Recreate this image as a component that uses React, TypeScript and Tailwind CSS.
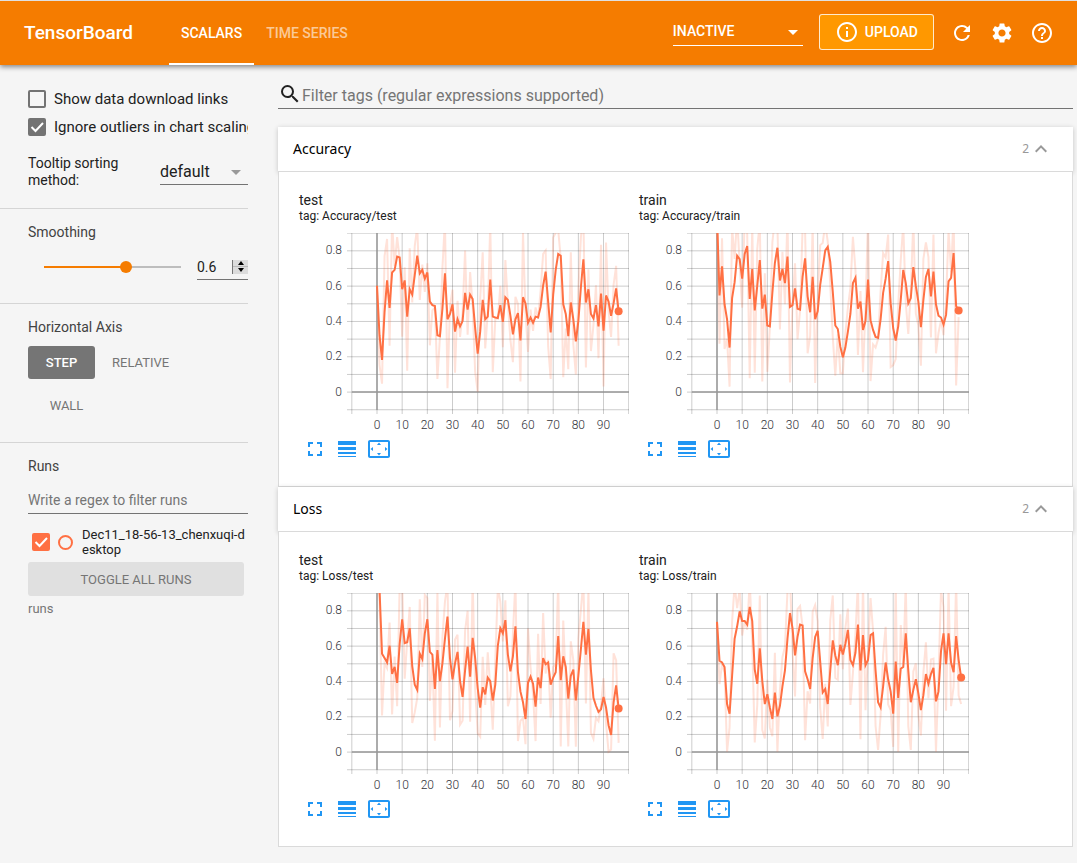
import { useState } from "react";
import type { ReactNode } from "react";
import {
  MdArrowDropDown,
  MdExpandLess,
  MdFullscreen,
  MdHelpOutline,
  MdInfoOutline,
  MdLineWeight,
  MdRefresh,
  MdSearch,
  MdSettings,
  MdSettingsOverscan,
} from "react-icons/md";

const WEIGHT = 0.6;

const accuracyTest = [
  0.6, 0.32, 0.18, 0.45, 0.63, 0.475, 0.675, 0.69, 0.765, 0.76, 0.58, 0.63, 0.425, 0.58, 0.55, 0.66, 0.77, 0.67, 0.69,
  0.64, 0.675, 0.51, 0.49, 0.485, 0.32, 0.315, 0.47, 0.67, 0.41, 0.44, 0.495, 0.34, 0.41, 0.37, 0.4, 0.56, 0.465, 0.55,
  0.525, 0.36, 0.215, 0.34, 0.52, 0.41, 0.425, 0.635, 0.425, 0.42, 0.417, 0.49, 0.395, 0.535, 0.52, 0.43, 0.325, 0.41,
  0.445, 0.29, 0.535, 0.5, 0.39, 0.42, 0.39, 0.425, 0.42, 0.48, 0.6, 0.68, 0.51, 0.335, 0.55, 0.69, 0.78, 0.77, 0.495,
  0.44, 0.315, 0.505, 0.41, 0.285, 0.4, 0.59, 0.75, 0.505, 0.58, 0.44, 0.415, 0.49, 0.37, 0.555, 0.345, 0.545, 0.51,
  0.43, 0.5, 0.585, 0.455,
];

const accuracyTrain = [
  1, 0.545, 0.71, 0.495, 0.41, 0.25, 0.53, 0.62, 0.77, 0.75, 0.64, 0.78, 0.825, 0.525, 0.695, 0.46, 0.6, 0.745, 0.47,
  0.55, 0.375, 0.37, 0.56, 0.73, 0.815, 0.63, 0.695, 0.615, 0.765, 0.48, 0.49, 0.585, 0.47, 0.465, 0.65, 0.755, 0.54,
  0.45, 0.65, 0.41, 0.455, 0.605, 0.7, 0.8, 0.82, 0.735, 0.565, 0.375, 0.355, 0.255, 0.195, 0.25, 0.34, 0.44, 0.615,
  0.645, 0.47, 0.51, 0.35, 0.4, 0.635, 0.405, 0.35, 0.31, 0.305, 0.41, 0.56, 0.64, 0.74, 0.5, 0.36, 0.29, 0.37, 0.52,
  0.69, 0.615, 0.5, 0.53, 0.705, 0.6, 0.51, 0.365, 0.52, 0.65, 0.695, 0.54, 0.68, 0.495, 0.43, 0.42, 0.38, 0.435, 0.625,
  0.645, 0.785, 0.485, 0.46,
];

const lossTest = [
  1, 0.92, 0.555, 0.53, 0.505, 0.6, 0.44, 0.48, 0.39, 0.61, 0.75, 0.615, 0.62, 0.7, 0.485, 0.38, 0.35, 0.555, 0.525,
  0.67, 0.75, 0.565, 0.55, 0.355, 0.575, 0.4, 0.5, 0.64, 0.765, 0.53, 0.41, 0.5, 0.565, 0.4, 0.31, 0.46, 0.595, 0.425,
  0.645, 0.53, 0.36, 0.25, 0.365, 0.325, 0.42, 0.4, 0.29, 0.38, 0.6, 0.7, 0.67, 0.745, 0.55, 0.455, 0.54, 0.71, 0.45,
  0.34, 0.28, 0.185, 0.39, 0.425, 0.385, 0.255, 0.42, 0.36, 0.53, 0.495, 0.505, 0.38, 0.42, 0.45, 0.655, 0.405, 0.54,
  0.48, 0.3, 0.43, 0.465, 0.29, 0.43, 0.58, 0.735, 0.55, 0.695, 0.46, 0.305, 0.26, 0.225, 0.24, 0.31, 0.25, 0.15, 0.095,
  0.28, 0.375, 0.245,
];

const lossTrain = [
  0.735, 0.515, 0.505, 0.48, 0.27, 0.215, 0.43, 0.64, 0.71, 0.795, 0.74, 0.74, 0.72, 0.82, 0.74, 0.465, 0.385, 0.585,
  0.4, 0.27, 0.325, 0.25, 0.185, 0.335, 0.2, 0.26, 0.37, 0.46, 0.64, 0.785, 0.7, 0.545, 0.65, 0.72, 0.715, 0.455, 0.41,
  0.355, 0.53, 0.65, 0.685, 0.51, 0.335, 0.355, 0.27, 0.46, 0.63, 0.545, 0.49, 0.605, 0.55, 0.61, 0.69, 0.52, 0.49,
  0.56, 0.72, 0.46, 0.66, 0.49, 0.52, 0.66, 0.67, 0.46, 0.28, 0.25, 0.37, 0.505, 0.41, 0.34, 0.215, 0.51, 0.305, 0.47,
  0.48, 0.67, 0.46, 0.28, 0.35, 0.41, 0.33, 0.235, 0.32, 0.44, 0.385, 0.44, 0.475, 0.285, 0.34, 0.57, 0.67, 0.495, 0.67,
  0.505, 0.45, 0.655, 0.52, 0.42,
];

// Inverts the debiased exponential moving average to recover the raw samples.
function rawFrom(smoothed: number[]): number[] {
  let last = 0;
  return smoothed.map((s, i) => {
    const acc = s * (1 - Math.pow(WEIGHT, i + 1));
    const raw = (acc - WEIGHT * last) / (1 - WEIGHT);
    last = acc;
    return Math.min(1, Math.max(0, raw));
  });
}

const xAt = (step: number) => 78 + step * 2.517;
const yAt = (value: number) => 158.7 - value * 176.6;
const toPoints = (values: number[]) => values.map((v, i) => `${xAt(i).toFixed(2)},${yAt(v).toFixed(2)}`).join(" ");

const xTicks = [-10, 0, 10, 20, 30, 40, 50, 60, 70, 80, 90, 100];
const yTicks = [-0.1, 0, 0.1, 0.2, 0.3, 0.4, 0.5, 0.6, 0.7, 0.8, 0.9];

function LineChart({ id, values }: { id: string; values: number[] }) {
  const end = values.length - 1;
  return (
    <svg width="330" height="202" viewBox="0 0 330 202" className="block" role="img" aria-label={id}>
      <defs>
        <clipPath id={id}>
          <rect x="53" y="0" width="277" height="177" />
        </clipPath>
      </defs>
      <g stroke="#000" strokeOpacity="0.2" strokeWidth="1">
        {xTicks.map((t) => (
          <line key={t} x1={xAt(t)} x2={xAt(t)} y1="0" y2="181" />
        ))}
        {yTicks.map((t) => (
          <line key={t} x1="48" x2="330" y1={yAt(t) + 0.4} y2={yAt(t) + 0.4} />
        ))}
      </g>
      <g stroke="#999" strokeWidth="1.5">
        <line x1={xAt(0)} x2={xAt(0)} y1="0" y2="177" />
        <line x1="53" x2="330" y1="159" y2="159" />
      </g>
      <g clipPath={`url(#${id})`} fill="none" stroke="#ff7043" strokeWidth="2">
        <polyline points={toPoints(rawFrom(values))} strokeOpacity="0.2" />
        <polyline points={toPoints(values)} />
      </g>
      <circle cx={xAt(end)} cy={yAt(values[end])} r="4" fill="#ff7043" />
      <g fill="#32323a" fontSize="12" fontWeight="300" fontFamily="Roboto, sans-serif">
        {[0, 0.2, 0.4, 0.6, 0.8].map((t) => (
          <text key={t} x="43" y={yAt(t) + 4} textAnchor="end">
            {t}
          </text>
        ))}
        {xTicks.slice(1, 11).map((t) => (
          <text key={t} x={xAt(t)} y="196" textAnchor="middle">
            {t}
          </text>
        ))}
      </g>
    </svg>
  );
}

function IconButton({ label, children }: { label: string; children: ReactNode }) {
  return (
    <button type="button" aria-label={label} className="flex size-8 items-center justify-center text-2xl">
      {children}
    </button>
  );
}

function ChartCard({ name, tag, values }: { name: string; tag: string; values: number[] }) {
  return (
    <article className="w-[330px]">
      <h3 className="text-sm leading-4">{name}</h3>
      <p className="text-xs leading-4">tag: {tag}</p>
      <div className="mt-[9px]">
        <LineChart id={tag.replace("/", "-")} values={values} />
      </div>
      <div className="-mt-0.5 flex text-[#2196f3]">
        <IconButton label="Toggle full size">
          <MdFullscreen />
        </IconButton>
        <IconButton label="Toggle y-axis log scale">
          <MdLineWeight />
        </IconButton>
        <IconButton label="Fit domain to data">
          <MdSettingsOverscan />
        </IconButton>
      </div>
    </article>
  );
}

function Category({ name, charts }: { name: string; charts: { name: string; values: number[] }[] }) {
  return (
    <section>
      <button
        type="button"
        className="flex h-[45px] w-full items-center border-b border-[#dadada] bg-white pr-5 pl-[15px] text-left font-['Noto_Sans',sans-serif] shadow-[0_1px_5px_rgba(0,0,0,0.2)]"
      >
        <span className="flex-1 text-sm text-black">{name}</span>
        <span className="text-xs text-[#999]">2</span>
        <MdExpandLess className="size-6 text-[#999]" />
      </button>
      <div className="flex flex-wrap gap-x-2.5 border-x border-b border-[#dadada] bg-white px-5 pt-5 pb-[21px]">
        {charts.map((c) => (
          <ChartCard key={c.name} name={c.name} tag={`${name}/${c.name}`} values={c.values} />
        ))}
      </div>
    </section>
  );
}

function Check({ id, label, initial }: { id: string; label: string; initial: boolean }) {
  return (
    <div className="flex h-7 items-center gap-2">
      <span className="grid shrink-0">
        <input
          id={id}
          type="checkbox"
          defaultChecked={initial}
          className="peer size-[18px] appearance-none rounded-xs border-2 border-[#737373] [grid-area:1/1] checked:bg-[#737373]"
        />
        <CheckMark />
      </span>
      <label htmlFor={id} className="text-[15px] whitespace-nowrap">
        {label}
      </label>
    </div>
  );
}

function CheckMark() {
  return (
    <svg
      viewBox="0 0 18 18"
      className="pointer-events-none invisible size-[18px] fill-none stroke-white stroke-2 [grid-area:1/1] peer-checked:visible"
    >
      <path d="M3.5 9l4 4L15 5" />
    </svg>
  );
}

function Header() {
  return (
    <header className="z-10 flex h-[65px] shrink-0 items-center border-t border-[#e0e0e0] bg-[#f57c00] pr-[15px] pl-6 font-medium text-white shadow-[0_2px_5px_rgba(0,0,0,0.45)]">
      <h1 className="text-[19px]">TensorBoard</h1>
      <nav className="ml-9 flex h-full flex-1 text-sm">
        <a href="#scalars" className="flex items-center border-b-2 border-white px-3 pt-0.5">
          SCALARS
        </a>
        <a href="#timeseries" className="flex items-center border-b-2 border-transparent px-3 pt-0.5 text-white/60">
          TIME SERIES
        </a>
      </nav>
      <div className="mb-1 grid w-[130px] items-center border-b border-white">
        <select aria-label="Inactive dashboards" className="h-7 appearance-none bg-transparent text-sm [grid-area:1/1]">
          <option>INACTIVE</option>
        </select>
        <MdArrowDropDown className="pointer-events-none mt-0.5 -mr-0.5 size-6 justify-self-end [grid-area:1/1]" />
      </div>
      <button
        type="button"
        className="mb-0.5 ml-4 flex h-9 items-center gap-1.5 rounded-[3px] border border-white/80 bg-[#ff9800] px-[15px] text-sm"
      >
        <MdInfoOutline className="size-6" />
        UPLOAD
      </button>
      <div className="ml-2 flex">
        <button type="button" aria-label="Reload" className="flex size-10 items-center justify-center">
          <MdRefresh className="size-6" />
        </button>
        <button type="button" aria-label="Settings" className="flex size-10 items-center justify-center">
          <MdSettings className="size-6" />
        </button>
        <button type="button" aria-label="Help" className="flex size-10 items-center justify-center">
          <MdHelpOutline className="size-6" />
        </button>
      </div>
    </header>
  );
}

function Smoothing() {
  const [value, setValue] = useState(WEIGHT);
  const pct = value * 100;
  const step = (delta: number) => setValue((v) => Math.min(1, Math.max(0, Math.round((v + delta) * 10) / 10)));
  return (
    <section className="h-[95px] border-b border-[#d5d5d5] pt-[15px] pl-7">
      <h2 className="text-sm leading-4 text-[#424242]">Smoothing</h2>
      <div className="mt-3.5 flex items-center pl-2.5">
        <input
          type="range"
          aria-label="Smoothing"
          min="0"
          max="1"
          step="0.1"
          value={value}
          onChange={(e) => setValue(Number(e.target.value))}
          style={{ backgroundImage: `linear-gradient(to right, #f57c00 ${pct}%, #bdbdbd ${pct}%)` }}
          className="h-3 w-[149px] appearance-none bg-[length:calc(100%-12px)_2px] bg-center bg-no-repeat [&::-webkit-slider-thumb]:size-3 [&::-webkit-slider-thumb]:appearance-none [&::-webkit-slider-thumb]:rounded-full [&::-webkit-slider-thumb]:bg-[#f57c00]"
        />
        <div className="ml-2.5 flex h-[26px] flex-1 items-center border-b border-[#737373]">
          <input
            type="text"
            aria-label="Smoothing value"
            value={value}
            onChange={(e) => setValue(Math.min(1, Math.max(0, Number(e.target.value) || 0)))}
            className="w-0 flex-1 bg-transparent text-sm"
          />
          <div className="flex h-3.5 w-4 flex-col border-l border-[#777] bg-[#dcdcdc]">
            <button
              type="button"
              aria-label="Increase smoothing"
              onClick={() => step(0.1)}
              className="flex flex-1 items-center justify-center border-b border-[#bbb]"
            >
              <svg viewBox="0 0 6 4" className="h-1 w-1.5">
                <path d="M3 0l3 4H0z" />
              </svg>
            </button>
            <button
              type="button"
              aria-label="Decrease smoothing"
              onClick={() => step(-0.1)}
              className="flex flex-1 items-center justify-center"
            >
              <svg viewBox="0 0 6 4" className="h-1 w-1.5">
                <path d="M3 4l3-4H0z" />
              </svg>
            </button>
          </div>
        </div>
      </div>
    </section>
  );
}

function Sidebar() {
  return (
    <aside className="w-[248px] shrink-0 overflow-hidden">
      <section className="h-[144px] border-b border-[#d5d5d5] pt-5 pl-7">
        <Check id="download" label="Show data download links" initial={false} />
        <Check id="outliers" label="Ignore outliers in chart scaling" initial={true} />
        <div className="mt-3.5 flex items-start">
          <label htmlFor="sorting" className="w-[132px] pr-6 text-sm leading-[17px]">
            Tooltip sorting method:
          </label>
          <div className="mt-1 grid flex-1 items-center border-b border-[#737373]">
            <select id="sorting" className="h-[25px] appearance-none bg-transparent text-base [grid-area:1/1]">
              <option>default</option>
            </select>
            <MdArrowDropDown className="pointer-events-none size-6 justify-self-end text-[#999] [grid-area:1/1]" />
          </div>
        </div>
      </section>
      <Smoothing />
      <section className="h-[139px] border-b border-[#d5d5d5] pt-[15px] pl-7">
        <h2 className="text-sm leading-4 text-[#424242]">Horizontal Axis</h2>
        <div className="mt-[11px] flex flex-wrap gap-y-2.5 text-[13px] text-[#757575]">
          <button type="button" className="h-[33px] w-[67px] rounded-[3px] bg-[#757575] font-medium text-white">
            STEP
          </button>
          <button type="button" className="h-[33px] px-[17px]">
            RELATIVE
          </button>
          <button type="button" className="h-[33px] w-[77px]">
            WALL
          </button>
        </div>
      </section>
      <section className="pt-[15px] pl-7">
        <h2 className="text-sm leading-4 text-[#424242]">Runs</h2>
        <input
          type="text"
          aria-label="Filter runs"
          placeholder="Write a regex to filter runs"
          className="mt-3 block h-7 w-full border-b border-[#737373] bg-transparent text-sm placeholder:text-[#757575]"
        />
        <div className="mt-[13px] flex items-center pl-1">
          <span className="grid shrink-0">
            <input
              id="run"
              type="checkbox"
              defaultChecked
              className="peer size-[18px] appearance-none rounded-xs border-2 border-[#ff7043] [grid-area:1/1] checked:bg-[#ff7043]"
            />
            <CheckMark />
          </span>
          <button
            type="button"
            aria-label="Show only this run"
            className="ml-2 size-[15px] shrink-0 rounded-full border-2 border-[#ff7043]"
          />
          <label htmlFor="run" className="ml-[9px] text-[13px] leading-[15px] break-all">
            Dec11_18-56-13_chenxuqi-desktop
          </label>
        </div>
        <div className="pr-1">
          <button type="button" className="mt-[5px] h-[34px] w-full rounded-[3px] bg-[#e0e0e0] pt-0.5 text-[13px] text-[#757575]">
            TOGGLE ALL RUNS
          </button>
        </div>
        <p className="mt-[5px] text-[13px] leading-4 text-[#757575]">runs</p>
      </section>
    </aside>
  );
}

export default function App() {
  return (
    <div className="flex min-h-screen flex-col bg-[#f5f5f5] font-[Roboto,sans-serif] text-[#212121]">
      <Header />
      <div className="flex flex-1">
        <Sidebar />
        <main className="min-w-0 flex-1 pt-[15px] pr-1 pl-[30px]">
          <div className="mb-[18px] flex h-[29px] items-center border-b border-[#737373]">
            <MdSearch className="size-6 shrink-0" />
            <input
              type="text"
              aria-label="Filter tags"
              placeholder="Filter tags (regular expressions supported)"
              className="flex-1 bg-transparent pt-1 text-base placeholder:text-[#757575]"
            />
          </div>
          <Category
            name="Accuracy"
            charts={[
              { name: "test", values: accuracyTest },
              { name: "train", values: accuracyTrain },
            ]}
          />
          <Category
            name="Loss"
            charts={[
              { name: "test", values: lossTest },
              { name: "train", values: lossTrain },
            ]}
          />
        </main>
      </div>
    </div>
  );
}
